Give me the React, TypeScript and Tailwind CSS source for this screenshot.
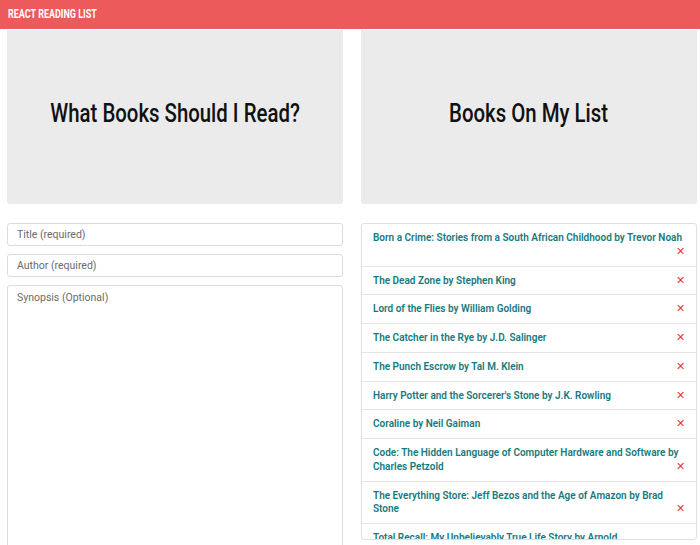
import React from "react";

const books = [
  "Born a Crime: Stories from a South African Childhood by Trevor Noah",
  "The Dead Zone by Stephen King",
  "Lord of the Flies by William Golding",
  "The Catcher in the Rye by J.D. Salinger",
  "The Punch Escrow by Tal M. Klein",
  "Harry Potter and the Sorcerer's Stone by J.K. Rowling",
  "Coraline by Neil Gaiman",
  "Code: The Hidden Language of Computer Hardware and Software by Charles Petzold",
  "The Everything Store: Jeff Bezos and the Age of Amazon by Brad Stone",
  "Total Recall: My Unbelievably True Life Story by Arnold Schwarzenegger",
];

const heading = { fontFamily: 'Roboto, "Liberation Sans", sans-serif' };

export default function App() {
  return (
    <div className="h-[545px] overflow-hidden bg-white" style={{ fontFamily: 'Roboto, "Liberation Sans", Arial, sans-serif' }}>
      {/* Header */}
      <header className="h-[29px] bg-[#ec5a5b] flex items-center pl-[8px]">
        <h1 className="text-white text-[12.5px] font-bold uppercase origin-left scale-x-[0.72] whitespace-nowrap" style={heading}>
          React Reading List
        </h1>
      </header>

      <div className="grid grid-cols-[336px_336px] gap-x-[18px] pl-[7px] pt-[1px]">
        {/* Left column */}
        <div className="flex flex-col">
          <div className="h-[174px] bg-[#ebebeb] rounded-b-[3px] flex items-center justify-center pb-[6px]">
            <h2 className="text-[25px] font-medium text-[#111] scale-x-[0.815] whitespace-nowrap" style={heading}>What Books Should I Read?</h2>
          </div>
          <form className="flex flex-col gap-[8px] mt-[19px]">
            <input
              placeholder="Title (required)"
              className="h-[23px] border border-[#dcdcdc] rounded-[3px] px-[9px] text-[10.5px] placeholder:text-[#6b6b6b] outline-none"
            />
            <input
              placeholder="Author (required)"
              className="h-[23px] border border-[#dcdcdc] rounded-[3px] px-[9px] text-[10.5px] placeholder:text-[#6b6b6b] outline-none"
            />
            <textarea
              placeholder="Synopsis (Optional)"
              className="h-[300px] border border-[#dcdcdc] rounded-[3px] px-[9px] py-[4px] text-[10.5px] placeholder:text-[#6b6b6b] outline-none resize-none"
            />
          </form>
        </div>

        {/* Right column */}
        <div className="flex flex-col">
          <div className="h-[174px] bg-[#ebebeb] rounded-b-[3px] flex items-center justify-center pb-[6px]">
            <h2 className="text-[25px] font-medium text-[#111] scale-x-[0.815] whitespace-nowrap" style={heading}>Books On My List</h2>
          </div>
          <ul className="mt-[19px] h-[317px] overflow-hidden border border-[#e0e0e0] rounded-[3px]">
            {books.map((b) => (
              <li key={b} className="flow-root border-b border-[#e4e4e4] px-[11px] py-[7px] text-[10px] leading-[13.75px] font-semibold text-[#187a7c]">
                {b}
                <span className="float-right text-[#e8383d] font-normal text-[11px] pl-[4px]">✕</span>
              </li>
            ))}
          </ul>
        </div>
      </div>
    </div>
  );
}
